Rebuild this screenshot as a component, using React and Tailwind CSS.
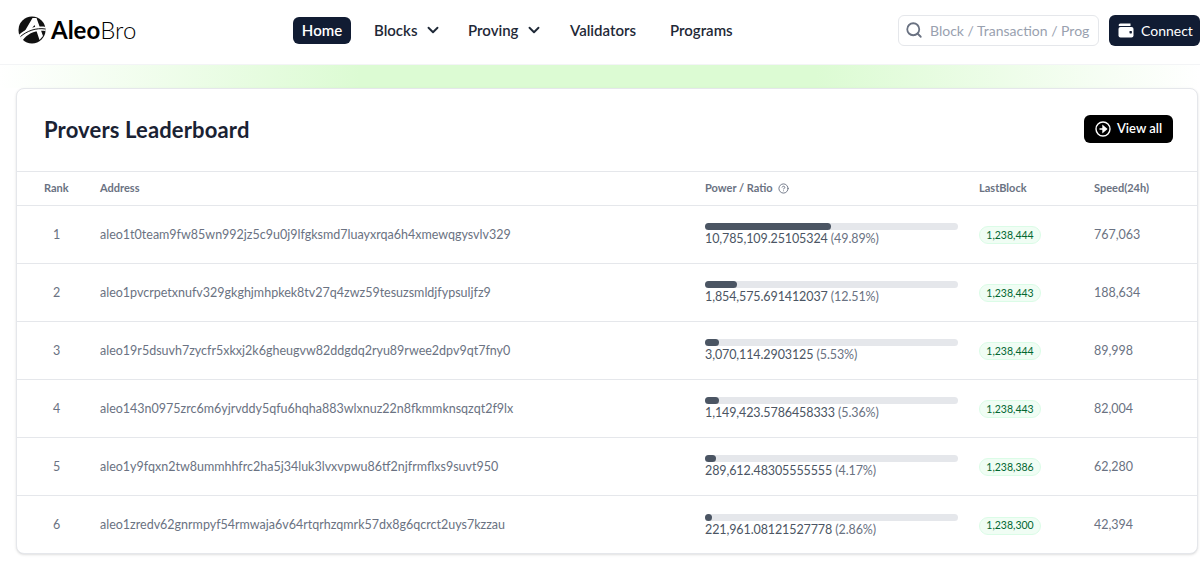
import React from "react";
import { ChevronDown, Search, CircleHelp } from "lucide-react";

const font = "font-['Lato','Noto_Sans',sans-serif]";

const rows = [
    { rank: 1, address: "aleo1t0team9fw85wn992jz5c9u0j9lfgksmd7luayxrqa6h4xmewqgysvlv329", ratio: 49.89, bar: 126, power: "10,785,109.25105324", block: "1,238,444", speed: "767,063" },
    { rank: 2, address: "aleo1pvcrpetxnufv329gkghjmhpkek8tv27q4zwz59tesuzsmldjfypsuljfz9", ratio: 12.51, bar: 32, power: "1,854,575.691412037", block: "1,238,443", speed: "188,634" },
    { rank: 3, address: "aleo19r5dsuvh7zycfr5xkxj2k6gheugvw82ddgdq2ryu89rwee2dpv9qt7fny0", ratio: 5.53, bar: 14, power: "3,070,114.2903125", block: "1,238,444", speed: "89,998" },
    { rank: 4, address: "aleo143n0975zrc6m6yjrvddy5qfu6hqha883wlxnuz22n8fkmmknsqzqt2f9lx", ratio: 5.36, bar: 14, power: "1,149,423.5786458333", block: "1,238,443", speed: "82,004" },
    { rank: 5, address: "aleo1y9fqxn2tw8ummhhfrc2ha5j34luk3lvxvpwu86tf2njfrmflxs9suvt950", ratio: 4.17, bar: 11, power: "289,612.48305555555", block: "1,238,386", speed: "62,280" },
    { rank: 6, address: "aleo1zredv62gnrmpyf54rmwaja6v64rtqrhzqmrk57dx8g6qcrct2uys7kzzau", ratio: 2.86, bar: 7, power: "221,961.08121527778", block: "1,238,300", speed: "42,394" },
];

const Logo = () => (
    <svg width="28" height="28" viewBox="0 0 28 28" className="shrink-0">
        <circle cx="14" cy="14" r="13.5" fill="#111" />
        {/* the A */}
        <path d="M14.5 2 L18.5 2 L25 20 L21.5 24 L16.5 9 L8 20 L4.5 19 Z" fill="#fff" />
        {/* the road */}
        <path d="M0.8 19 C8 12.5 18 9.5 27.8 11 L27.5 15 C18 13.5 10 17 4.5 24.5 Z" fill="#fff" />
        <path d="M2.5 20.5 C9 15 18 11.5 27.5 13" fill="none" stroke="#111" strokeWidth="1" />
    </svg>
);

const WalletIcon = () => (
    <svg width="16" height="15" viewBox="0 0 16 15" className="shrink-0">
        <path d="M2.5 0.5 H12.5 V3 H0.8 A2 2 0 0 1 2.5 0.5 Z" fill="#fff" />
        <rect x="0.5" y="4" width="15" height="10.5" rx="2" fill="#fff" />
        <rect x="11.5" y="8" width="2.4" height="2.4" rx="0.6" fill="#111c33" />
    </svg>
);

const App = () => {
    return (
        <div className={`${font} w-[1200px] h-[586px] overflow-hidden bg-white text-[#111827]`}>
            {/* Header */}
            <header className="flex items-center h-[65px] pl-[18px] pb-[4px] border-b border-gray-100">
                <div className="flex items-center w-[275px] gap-[5px]">
                    <Logo />
                    <span className="text-[24px] leading-none text-black">
                        <span className="font-bold">Aleo</span>
                        <span className="font-light">Bro</span>
                    </span>
                </div>
                <nav className="flex items-center text-[15px] font-semibold text-[#1f2937]">
                    <span className="flex items-center justify-center w-[58px] h-[27px] rounded-md bg-[#111c33] text-white">Home</span>
                    <span className="flex items-center ml-[23px] w-[94px]">
                        Blocks
                        <ChevronDown className="ml-[7px] w-[18px] h-[18px]" strokeWidth={2.5} />
                    </span>
                    <span className="flex items-center w-[102px]">
                        Proving
                        <ChevronDown className="ml-[7px] w-[18px] h-[18px]" strokeWidth={2.5} />
                    </span>
                    <span className="w-[100px]">Validators</span>
                    <span>Programs</span>
                </nav>
                <div className="ml-auto flex items-center gap-[10px]">
                    <div className="flex items-center w-[201px] h-[31px] pl-[6px] rounded-md border border-gray-200 bg-white overflow-hidden">
                        <Search className="w-[18px] h-[18px] text-gray-500 shrink-0" strokeWidth={2.4} />
                        <span className="ml-[7px] text-[14px] text-gray-400 whitespace-nowrap">Block / Transaction / Prog</span>
                    </div>
                    <div className="flex items-center w-[91px] h-[31px] pl-[9px] rounded-md bg-[#111c33] text-white text-[14px]">
                        <WalletIcon />
                        <span className="ml-[7px]">Connect</span>
                    </div>
                </div>
            </header>

            {/* Green strip */}
            <div className="h-[23px] bg-[linear-gradient(90deg,#ffffff_0%,#dcfbd3_30%,#dcfbd3_68%,#ffffff_100%)]" />

            {/* Card */}
            <div className="ml-[16px] mr-[2px] h-[466px] rounded-lg border border-gray-200 bg-white shadow-sm">
                <div className="flex items-center justify-between h-[83px] pl-[27px] pr-[24px] pb-[2px] border-b border-gray-200">
                    <h1 className="text-[22px] font-bold text-[#1a2233] tracking-[0.15px]">Provers Leaderboard</h1>
                    <button className="flex items-center justify-center gap-[6px] w-[89px] h-[28px] rounded-md bg-black text-white text-[13px] font-semibold">
                        <svg width="16" height="16" viewBox="0 0 16 16" fill="none" stroke="currentColor" strokeWidth="1.4">
                            <circle cx="8" cy="8" r="7" />
                            <path d="M4.5 8 H8 M8 5 L11.5 8 L8 11 Z" fill="currentColor" />
                        </svg>
                        View all
                    </button>
                </div>

                <div className="grid grid-cols-[83px_605px_274px_115px_1fr] items-center h-[34px] border-b border-gray-200 text-[11px] font-bold text-gray-500">
                    <span className="pl-[27px]">Rank</span>
                    <span>Address</span>
                    <span className="flex items-center gap-[5px]">
                        Power / Ratio
                        <CircleHelp className="w-[11px] h-[11px]" />
                    </span>
                    <span>LastBlock</span>
                    <span>Speed(24h)</span>
                </div>

                {rows.map((row, i) => (
                    <div
                        key={row.rank}
                        className={`grid grid-cols-[83px_605px_274px_115px_1fr] items-center h-[58px] pt-[1px] text-[12.5px] text-gray-500 ${
                            i < rows.length - 1 ? "border-b border-gray-200" : ""
                        }`}
                    >
                        <span className="pl-[36px]">{row.rank}</span>
                        <span>{row.address}</span>
                        <div>
                            <div className="w-[253px] h-[7px] rounded-full bg-gray-200">
                                <div className="h-full rounded-full bg-[#4b5563]" style={{ width: row.bar }} />
                            </div>
                            <div className="leading-[17px] text-[#4b5563] tracking-[-0.1px]">
                                {row.power} <span className="text-gray-500">({row.ratio}%)</span>
                            </div>
                        </div>
                        <div>
                            <span className="inline-flex items-center justify-center w-[62px] h-[18px] rounded-full border border-green-100 bg-green-50 text-[10.5px] text-green-800">
                                {row.block}
                            </span>
                        </div>
                        <span>{row.speed}</span>
                    </div>
                ))}
            </div>
        </div>
    );
};

export default App;
